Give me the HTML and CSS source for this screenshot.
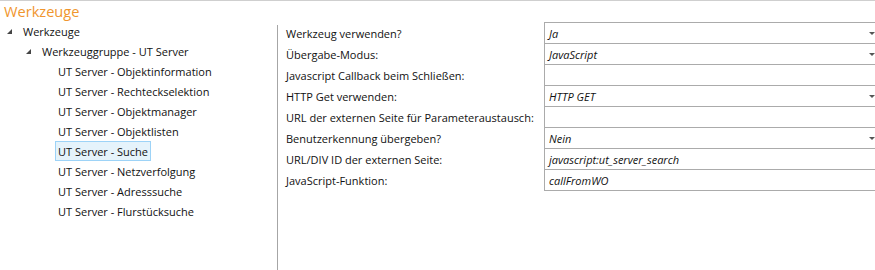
FILE: index.html
```html
<!DOCTYPE html>
<html>
<head>
<meta charset="utf-8">
<link rel="stylesheet" href="styles.css">
</head>
<body>
<div class="page">
  <div class="title">Werkzeuge</div>
  <div class="main">
    <div class="tree">
      <div class="node l1"><span class="exp"></span><span class="txt">Werkzeuge</span></div>
      <div class="node l2"><span class="exp"></span><span class="txt">Werkzeuggruppe - UT Server</span></div>
      <div class="node l3"><span class="txt">UT Server - Objektinformation</span></div>
      <div class="node l3"><span class="txt">UT Server - Rechteckselektion</span></div>
      <div class="node l3"><span class="txt">UT Server - Objektmanager</span></div>
      <div class="node l3"><span class="txt">UT Server - Objektlisten</span></div>
      <div class="node l3"><span class="txt sel">UT Server - Suche</span></div>
      <div class="node l3"><span class="txt">UT Server - Netzverfolgung</span></div>
      <div class="node l3"><span class="txt">UT Server - Adresssuche</span></div>
      <div class="node l3"><span class="txt">UT Server - Flurstücksuche</span></div>
    </div>
    <div class="sep"></div>
    <div class="form">
      <div class="labels">
        <div class="lab">Werkzeug verwenden?</div>
        <div class="lab">Übergabe-Modus:</div>
        <div class="lab">Javascript Callback beim Schließen:</div>
        <div class="lab">HTTP Get verwenden:</div>
        <div class="lab">URL der externen Seite für Parameteraustausch:</div>
        <div class="lab">Benutzerkennung übergeben?</div>
        <div class="lab">URL/DIV ID der externen Seite:</div>
        <div class="lab">JavaScript-Funktion:</div>
      </div>
      <div class="fields">
        <div class="fld combo"><span>Ja</span><span class="arr"></span></div>
        <div class="fld combo"><span>JavaScript</span><span class="arr"></span></div>
        <div class="fld"><span></span></div>
        <div class="fld combo"><span>HTTP GET</span><span class="arr"></span></div>
        <div class="fld"><span></span></div>
        <div class="fld combo"><span>Nein</span><span class="arr"></span></div>
        <div class="fld"><span>javascript:ut_server_search</span></div>
        <div class="fld"><span>callFromWO</span></div>
      </div>
    </div>
  </div>
</div>
</body>
</html>
```

FILE: styles.css
```css
html, body {
  margin: 0;
  padding: 0;
  background: #ffffff;
}
body {
  font-family: "Open Sans", "Noto Sans", sans-serif;
  font-size: 11px;
  color: #111111;
  width: 875px;
  height: 270px;
  overflow: hidden;
}
.page {
  border-top: 1px solid #cfcfcf;
  height: 269px;
  display: flex;
  flex-direction: column;
}
.title {
  height: 20px;
  padding-left: 4px;
  font-size: 14.6px;
  line-height: 21px;
  color: #f0962e;
}
.main {
  flex: 1;
  display: flex;
}
.tree {
  width: 277px;
  display: flex;
  flex-direction: column;
}
.node {
  height: 20px;
  display: flex;
  align-items: center;
  white-space: nowrap;
}
.node.l1 { padding-left: 7px; }
.node.l2 { padding-left: 26px; }
.node.l3 { padding-left: 55px; }
.exp {
  width: 0;
  height: 0;
  border-left: 5px solid transparent;
  border-bottom: 5px solid #454545;
  margin-right: 8px;
  margin-top: 1px;
}
.txt {
  padding: 0 2px;
  height: 18px;
  line-height: 19px;
  border: 1px solid transparent;
}
.txt.sel {
  background: #e5f3fb;
  border-color: #9dd3f7;
}
.sep {
  width: 1px;
  background: #a6a6a6;
  margin-top: 4px;
}
.form {
  flex: 1;
  display: flex;
  padding-left: 8px;
  padding-top: 1px;
}
.labels {
  width: 258px;
  display: flex;
  flex-direction: column;
  padding-top: 1px;
}
.lab {
  height: 21px;
  line-height: 21px;
  white-space: nowrap;
}
.fields {
  flex: 1;
  display: flex;
  flex-direction: column;
  margin-right: -20px;
}
.fld {
  height: 20px;
  border: 1px solid #ababab;
  border-top: none;
  display: flex;
  align-items: center;
  padding-left: 4px;
  font-style: italic;
  color: #111111;
  position: relative;
}
.fld:first-child {
  border-top: 1px solid #ababab;
}
.arr {
  position: absolute;
  left: 324px;
  top: 9px;
  width: 0;
  height: 0;
  border-left: 3px solid transparent;
  border-right: 3px solid transparent;
  border-top: 3px solid #555;
}
```
